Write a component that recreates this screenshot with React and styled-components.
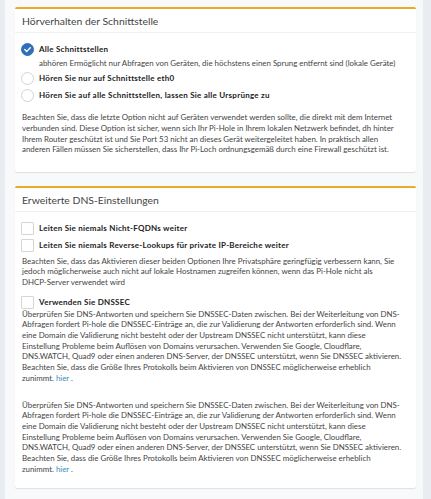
import React from "react";
import styled, { createGlobalStyle } from "styled-components";

const GlobalStyle = createGlobalStyle`
  html, body { margin: 0; padding: 0; }
  body {
    background: #e9edf2;
    font-family: Lato, "Liberation Sans", sans-serif;
    color: #333;
    -webkit-font-smoothing: antialiased;
  }
`;

const Page = styled.div`
  margin: 0 8px 0 5px;
  background: #f8f9fa;
  padding: 7px 7px 6px 10px;
  min-height: 499px;
  box-sizing: border-box;
`;

const Box = styled.section`
  background: #fff;
  border-top: 2px solid #eba92b;
  border-radius: 2px;
  box-shadow: 0 1px 1px rgba(0, 0, 0, 0.1);
  margin-bottom: 14px;
`;

const BoxHeader = styled.h3`
  margin: 0;
  height: 23px;
  padding: 0 7px;
  display: flex;
  align-items: center;
  border-bottom: 1px solid #f1f1f1;
  font-size: 10.4px;
  font-weight: 400;
  color: #444;
`;

const BoxBody = styled.div`
  padding: 7.5px 7px ${(p) => p.$pb}px;
  font-size: 7.9px;
  line-height: 10.7px;
`;

const ChoiceRow = styled.label`
  display: flex;
  align-items: center;
  gap: 5px;
  height: 17px;
  margin-left: -1px;
  margin-bottom: ${(p) => p.$mb || 0}px;
`;

const RadioMark = styled.span`
  width: 13px;
  height: 13px;
  box-sizing: border-box;
  border-radius: 50%;
  flex: none;
  display: flex;
  align-items: center;
  justify-content: center;
  background: ${(p) => (p.$checked ? "#2f6fba" : "#fff")};
  border: 1px solid ${(p) => (p.$checked ? "#2f6fba" : "#d4d4d4")};
`;

const CheckMark = styled.span`
  width: 13px;
  height: 13px;
  box-sizing: border-box;
  border-radius: 1px;
  flex: none;
  background: #fff;
  border: 1px solid #d6d6d6;
`;

const ChoiceText = styled.span`
  font-size: 8px;
  font-weight: 700;
  letter-spacing: 0.25px;
  color: #222;
  white-space: nowrap;
`;

const Desc = styled.div`
  padding-left: 17px;
  white-space: nowrap;
  color: #444;
  margin-bottom: 2px;
`;

const Para = styled.p`
  margin: ${(p) => p.$mt || 0}px 0 ${(p) => p.$mb || 0}px;
  white-space: nowrap;
  color: #444;
`;

const Link = styled.a`
  color: #3c8dbc;
  text-decoration: none;
`;

const Lines = ({ lines }) =>
  lines.map((l, i) => (
    <React.Fragment key={i}>
      {l}
      {i < lines.length - 1 && <br />}
    </React.Fragment>
  ));

const Radio = ({ checked, children }) => (
  <ChoiceRow>
    <RadioMark $checked={checked}>
      {checked && (
        <svg width="9" height="9" viewBox="0 0 9 9">
          <path d="M1.8 4.6 L3.7 6.4 L7.3 2.7" fill="none" stroke="#fff" strokeWidth="1.4" strokeLinecap="round" strokeLinejoin="round" />
        </svg>
      )}
    </RadioMark>
    <ChoiceText>{children}</ChoiceText>
  </ChoiceRow>
);

const Check = ({ children, mb }) => (
  <ChoiceRow $mb={mb}>
    <CheckMark />
    <ChoiceText>{children}</ChoiceText>
  </ChoiceRow>
);

const dnssecLines = [
  "Überprüfen Sie DNS-Antworten und speichern Sie DNSSEC-Daten zwischen. Bei der Weiterleitung von DNS-",
  "Abfragen fordert Pi-hole die DNSSEC-Einträge an, die zur Validierung der Antworten erforderlich sind. Wenn",
  "eine Domain die Validierung nicht besteht oder der Upstream DNSSEC nicht unterstützt, kann diese",
  "Einstellung Probleme beim Auflösen von Domains verursachen. Verwenden Sie Google, Cloudflare,",
  "DNS.WATCH, Quad9 oder einen anderen DNS-Server, der DNSSEC unterstützt, wenn Sie DNSSEC aktivieren.",
  "Beachten Sie, dass die Größe Ihres Protokolls beim Aktivieren von DNSSEC möglicherweise erheblich",
  <>zunimmt. <Link href="#">hier</Link> .</>,
];

export default function App() {
  return (
    <>
      <GlobalStyle />
      <Page>
        <Box>
          <BoxHeader>Hörverhalten der Schnittstelle</BoxHeader>
          <BoxBody $pb={17}>
            <Radio checked>Alle Schnittstellen</Radio>
            <Desc>
              abhören Ermöglicht nur Abfragen von Geräten, die höchstens einen Sprung entfernt sind (lokale Geräte)
            </Desc>
            <Radio>Hören Sie nur auf Schnittstelle eth0</Radio>
            <Radio>Hören Sie auf alle Schnittstellen, lassen Sie alle Ursprünge zu</Radio>
            <Para $mt={8}>
              <Lines
                lines={[
                  "Beachten Sie, dass die letzte Option nicht auf Geräten verwendet werden sollte, die direkt mit dem Internet",
                  "verbunden sind. Diese Option ist sicher, wenn sich Ihr Pi-Hole in Ihrem lokalen Netzwerk befindet, dh hinter",
                  "Ihrem Router geschützt ist und Sie Port 53 nicht an dieses Gerät weitergeleitet haben. In praktisch allen",
                  "anderen Fällen müssen Sie sicherstellen, dass Ihr Pi-Loch ordnungsgemäß durch eine Firewall geschützt ist.",
                ]}
              />
            </Para>
          </BoxBody>
        </Box>
        <Box>
          <BoxHeader>Erweiterte DNS-Einstellungen</BoxHeader>
          <BoxBody $pb={14}>
            <Check>Leiten Sie niemals Nicht-FQDNs weiter</Check>
            <Check mb={2}>Leiten Sie niemals Reverse-Lookups für private IP-Bereiche weiter</Check>
            <Para $mb={6}>
              <Lines
                lines={[
                  "Beachten Sie, dass das Aktivieren dieser beiden Optionen Ihre Privatsphäre geringfügig verbessern kann, Sie",
                  "jedoch möglicherweise auch nicht auf lokale Hostnamen zugreifen können, wenn das Pi-Hole nicht als",
                  "DHCP-Server verwendet wird",
                ]}
              />
            </Para>
            <Check>Verwenden Sie DNSSEC</Check>
            <Para $mt={-2} $mb={16}>
              <Lines lines={dnssecLines} />
            </Para>
            <Para>
              <Lines lines={dnssecLines} />
            </Para>
          </BoxBody>
        </Box>
      </Page>
    </>
  );
}
